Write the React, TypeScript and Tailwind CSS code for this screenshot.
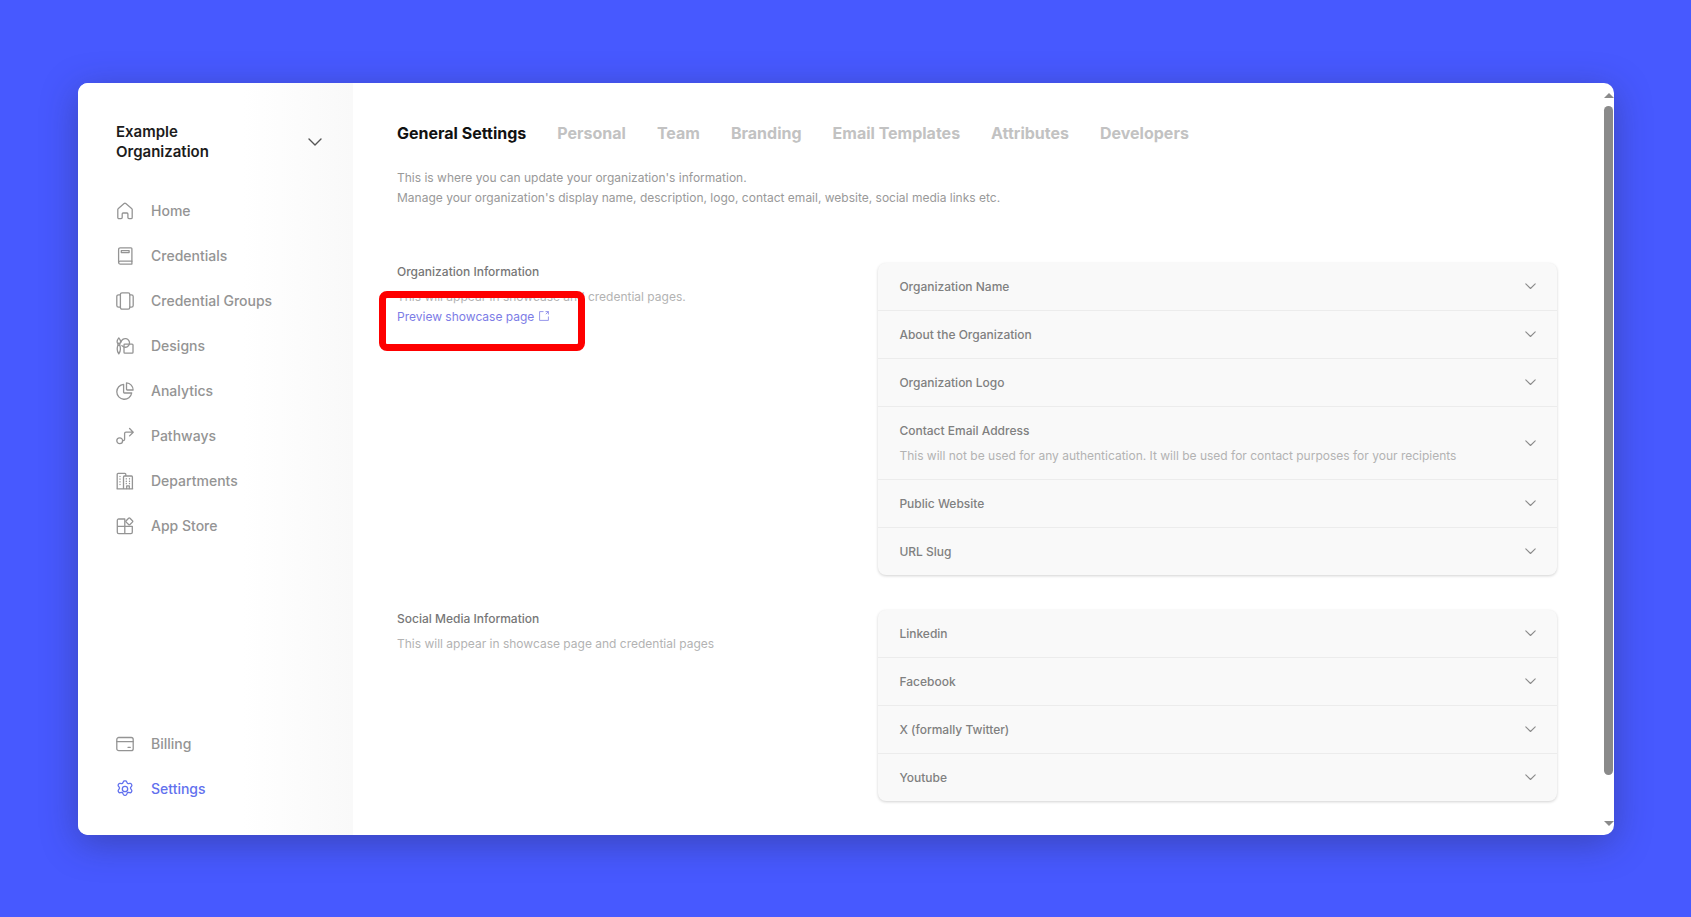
import { useState } from 'react';
import type { ReactNode } from 'react';
import { clsx } from 'clsx';

function Icon({ children }: { children: ReactNode }) {
  return (
    <svg
      viewBox="0 0 18 18"
      className="size-[18px] shrink-0"
      fill="none"
      stroke="currentColor"
      strokeWidth="1.3"
      strokeLinecap="round"
      strokeLinejoin="round"
      aria-hidden="true"
    >
      {children}
    </svg>
  );
}

function Chevron({ className }: { className?: string }) {
  return (
    <svg
      viewBox="0 0 14 8"
      className={className}
      fill="none"
      stroke="currentColor"
      strokeWidth="1.4"
      strokeLinecap="round"
      strokeLinejoin="round"
      aria-hidden="true"
    >
      <path d="M1 1l6 6 6-6" />
    </svg>
  );
}

const mainLinks = [
  {
    label: 'Home',
    icon: (
      <Icon>
        <path d="M1.8 7.6c0-.5.2-.9.6-1.2l5.7-4.8c.5-.4 1.2-.4 1.7 0l5.8 4.8c.4.3.6.7.6 1.2v7.9c0 .7-.5 1.2-1.2 1.2h-2c-.6 0-1.1-.5-1.1-1.1v-3.7c0-.5-.4-.9-.9-.9H7.1c-.5 0-.9.4-.9.9v3.7c0 .6-.5 1.1-1.1 1.1H3c-.7 0-1.2-.5-1.2-1.2V7.6z" />
      </Icon>
    ),
  },
  {
    label: 'Credentials',
    icon: (
      <Icon>
        <path d="M15.9 14.2V1.7c0-.5-.4-.9-.9-.9H4.2c-.9 0-1.6.7-1.6 1.6v12.9" />
        <path d="M15.9 14.2H4.1c-.8 0-1.5.5-1.5 1.4 0 .9.7 1.5 1.5 1.5h11.8v-2.9z" />
        <rect x="5.3" y="3.6" width="7.8" height="2" />
      </Icon>
    ),
  },
  {
    label: 'Credential Groups',
    icon: (
      <Icon>
        <rect x="4.4" y=".8" width="9.4" height="16.4" rx="1.6" />
        <path d="M4.4 2.8H2.6c-1 0-1.8.8-1.8 1.8v8.8c0 1 .8 1.8 1.8 1.8h1.8" />
        <path d="M13.8 2.8h1.6c1 0 1.8.8 1.8 1.8v8.8c0 1-.8 1.8-1.8 1.8h-1.6" />
      </Icon>
    ),
  },
  {
    label: 'Designs',
    icon: (
      <Icon>
        <path d="M2.8.9C1.7 2.3 1.1 3.5 1.1 4.8c0 .7.3 1.4.8 1.7h1.900c.5-.3.8-1 .8-1.7 0-1.300-.6-2.500-1.800-3.900z" />
        <path d="M1.9 6.5h1.9v1.8H1.9zM1.9 8.3c-.4 1.2-.7 2.4-.7 3.7 0 1.8.5 3.3 1.6 4.9 1.1-1.6 1.6-3.1 1.6-4.9 0-1.3-.2-2.500-.6-3.700" />
        <path d="M5 5.200a4.300 4.300 0 1 1 3.200 4.900c-.9-.2-1.700-.8-2.300-1.500" />
        <path d="M8 7.900c0-.5.400-.8.800-.8h7.300c.5 0 .9.400.9.900v7.300c0 .5-.4.900-.9.900H8.800c-.4 0-.8-.4-.8-.9V7.900z" />
      </Icon>
    ),
  },
  {
    label: 'Analytics',
    icon: (
      <Icon>
        <path d="M7.600 2.300A7.500 7.500 0 1 0 15.700 11H8.400c-.5 0-.8-.4-.8-.8V2.300z" />
        <path d="M10.500.9v6.400c0 .4.300.7.700.7h5.900A7 7 0 0 0 10.500.9z" />
      </Icon>
    ),
  },
  {
    label: 'Pathways',
    icon: (
      <Icon>
        <circle cx="3.7" cy="13.7" r="2.9" />
        <path d="M6.600 13.700h.6c.8 0 1.400-.6 1.400-1.400V6.600c0-.8.600-1.400 1.400-1.400h7M13.600 1.500l3.600 3.700-3.600 3.700" />
      </Icon>
    ),
  },
  {
    label: 'Departments',
    icon: (
      <Icon>
        <path d="M1.200 16.800V2.200c0-.5.400-.9.900-.9h6.800c.5 0 .9.400.9.900v1.700M1 16.800h15.700M7.500 16.800V5c0-.6.400-1 1-1h7c.5 0 .9.400.9.900v11.900" />
        <path d="M4 4.300v.2M4 7v.2M4 9.700v.2M4 12.400v.2M10.300 6.700v.2M13.500 6.700v.2M10.300 9.200v.2M13.500 9.200v.2M10.300 11.500v.2M13.500 11.500v.2M10.700 16.600v-2.700h2.600v2.700" />
      </Icon>
    ),
  },
  {
    label: 'App Store',
    icon: (
      <Icon>
        <path d="M8.800 2H2.700c-.8 0-1.400.6-1.400 1.400v5.900h7.500V2zM8.800 9.300H1.300v5.900c0 .8.600 1.400 1.400 1.400h6.100V9.300zM8.800 9.300v7.300h6.100c.8 0 1.400-.6 1.400-1.400V9.300H8.800z" />
        <rect x="10.6" y="1.7" width="5.4" height="5.4" rx="1" transform="rotate(45 13.3 4.4)" />
      </Icon>
    ),
  },
];

const footerLinks = [
  {
    label: 'Billing',
    icon: (
      <Icon>
        <rect x=".8" y="2.5" width="16.4" height="13.2" rx="2" />
        <path d="M.8 6.600h16.400M12 12.300h2.300" />
      </Icon>
    ),
  },
  {
    label: 'Settings',
    active: true,
    icon: (
      <Icon>
        <circle cx="9" cy="9" r="2.7" />
        <path d="M7.300 1.700c.2-.6.800-.9 1.300-.9h.8c.6 0 1.100.300 1.300.9l.4 1.100c.2.600.900 1 1.500.8l1.200-.2c.6-.1 1.200.1 1.500.6l.4.700c.3.500.2 1.100-.2 1.600l-.7.900c-.4.500-.4 1.200 0 1.700l.7.900c.4.500.5 1.100.2 1.600l-.4.700c-.3.500-.9.700-1.500.6l-1.200-.2c-.6-.1-1.300.2-1.500.8l-.4 1.100c-.2.600-.7.900-1.300.9h-.8c-.5 0-1.100-.3-1.300-.9l-.4-1.100c-.2-.6-.9-.9-1.500-.8l-1.200.2c-.6.100-1.200-.1-1.500-.6l-.4-.7c-.3-.5-.2-1.100.2-1.600l.7-.9c.4-.5.400-1.200 0-1.700l-.7-.9c-.4-.5-.5-1.100-.2-1.600l.4-.7c.3-.5.900-.7 1.500-.6l1.200.2c.6.100 1.300-.2 1.500-.8l.4-1.100z" />
      </Icon>
    ),
  },
];

const tabs = ['General Settings', 'Personal', 'Team', 'Branding', 'Email Templates', 'Attributes', 'Developers'];

const organizationFields = [
  { title: 'Organization Name' },
  { title: 'About the Organization' },
  { title: 'Organization Logo' },
  {
    title: 'Contact Email Address',
    hint: 'This will not be used for any authentication. It will be used for contact purposes for your recipients',
  },
  { title: 'Public Website' },
  { title: 'URL Slug' },
];

const socialFields = [{ title: 'Linkedin' }, { title: 'Facebook' }, { title: 'X (formally Twitter)' }, { title: 'Youtube' }];

function NavItem({ label, icon, active }: { label: string; icon: ReactNode; active?: boolean }) {
  return (
    <li>
      <a
        href="#"
        className={clsx('flex h-[45px] items-center gap-[17px] text-sm font-medium', active ? 'text-[#6271ee]' : 'text-[#949494]')}
      >
        {icon}
        {label}
      </a>
    </li>
  );
}

function FieldList({ fields }: { fields: { title: string; hint?: string }[] }) {
  return (
    <div className="divide-y divide-[#ececec] self-start overflow-hidden rounded-lg bg-[#f9f9f9] shadow-[0_1px_3px_rgba(0,0,0,0.18)]">
      {fields.map((field) => (
        <button key={field.title} type="button" className="flex w-full items-center justify-between px-[21px] py-[13px] text-left">
          <span className="text-xs leading-[21px]">
            <span className="block font-medium text-[#808080]">{field.title}</span>
            {field.hint && <span className="mt-1 block text-[#b3b3b3]">{field.hint}</span>}
          </span>
          <Chevron className="w-[11px] text-[#8c8c8c]" />
        </button>
      ))}
    </div>
  );
}

export default function App() {
  const [activeTab, setActiveTab] = useState('General Settings');

  return (
    <div className="flex min-h-screen bg-[#4759ff] pt-[83px] pr-[77px] pb-[82px] pl-[78px] font-['Inter',sans-serif]">
      <div className="flex flex-1 overflow-hidden rounded-[10px] bg-white shadow-[0_8px_36px_rgba(40,40,80,0.4)]">
        <aside className="flex w-[275px] shrink-0 flex-col bg-linear-to-r from-white from-60% to-[#f9f9f9] pt-[39px] pr-[31px] pb-6 pl-[38px]">
          <button type="button" className="flex items-center justify-between text-left">
            <span className="w-28 text-[15px] leading-5 font-semibold text-[#1c1c1c]">Example Organization</span>
            <Chevron className="w-[14px] text-[#555]" />
          </button>
          <nav className="mt-[26px] flex flex-1 flex-col justify-between">
            <ul>
              {mainLinks.map((link) => (
                <NavItem key={link.label} {...link} />
              ))}
            </ul>
            <ul>
              {footerLinks.map((link) => (
                <NavItem key={link.label} {...link} />
              ))}
            </ul>
          </nav>
        </aside>

        <main className="min-w-0 flex-1 pt-[38px] pl-[44px]">
          <div className="flex gap-[31px]" role="tablist">
            {tabs.map((tab) => (
              <button
                key={tab}
                type="button"
                role="tab"
                aria-selected={tab === activeTab}
                onClick={() => setActiveTab(tab)}
                className={clsx('text-base leading-6 font-bold', tab === activeTab ? 'text-[#111]' : 'text-[#c2c2c2]')}
              >
                {tab}
              </button>
            ))}
          </div>
          <p className="mt-[23px] text-xs leading-5 text-[#999]">
            This is where you can update your organization's information.
            <br />
            Manage your organization's display name, description, logo, contact email, website, social media links etc.
          </p>

          <section className="mt-[55px] grid grid-cols-[41.5%_1fr]">
            <div className="relative self-start text-xs leading-5">
              <h2 className="leading-[18px] font-medium text-[#777]">Organization Information</h2>
              <p className="mt-1.5 text-[#b3b3b3]">This will appear in showcase and credential pages.</p>
              <a href="#" className="flex items-center gap-[5px] text-[#7c7ce6]">
                Preview showcase page
                <svg viewBox="0 0 10 10" className="mb-0.5 size-[10px]" fill="none" stroke="currentColor" strokeWidth=".8" aria-hidden="true">
                  <path d="M4.500.6H.6v8.800h8.800V5.500M6.500.6h2.900v2.900M9.400.6L6.800 3.200" />
                </svg>
              </a>
              <div className="absolute top-7 -left-[18px] h-[60px] w-[206px] rounded-lg border-7 border-[#fe0000]" />
            </div>
            <FieldList fields={organizationFields} />
          </section>

          <section className="mt-[35px] grid grid-cols-[41.5%_1fr]">
            <div className="text-xs leading-5">
              <h2 className="leading-[18px] font-medium text-[#777]">Social Media Information</h2>
              <p className="mt-1.5 text-[#b3b3b3]">This will appear in showcase page and credential pages</p>
            </div>
            <FieldList fields={socialFields} />
          </section>
        </main>

        <div className="ml-[46px] flex w-[11px] shrink-0 flex-col items-center pt-[10px] pb-[9px]">
          <svg viewBox="0 0 10 5" className="w-[10px] fill-[#8a8a8a]" aria-hidden="true">
            <path d="M0 5l5-5 5 5z" />
          </svg>
          <div className="mt-2 mb-[46px] w-[9px] flex-1 rounded-full bg-[#8a8a8a]" />
          <svg viewBox="0 0 10 5" className="w-[10px] fill-[#8a8a8a]" aria-hidden="true">
            <path d="M0 0l5 5 5-5z" />
          </svg>
        </div>
      </div>
    </div>
  );
}
